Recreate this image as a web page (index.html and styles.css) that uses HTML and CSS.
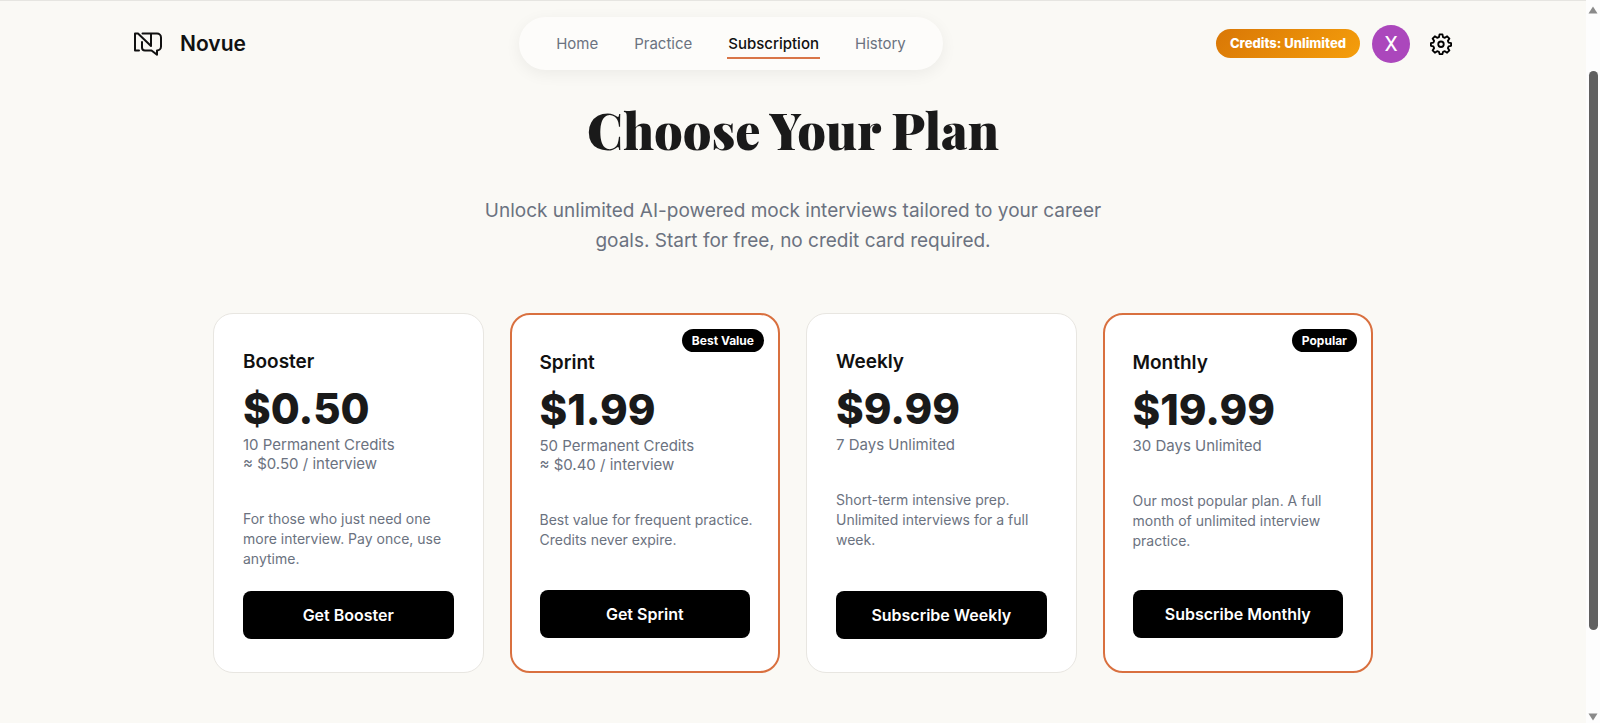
FILE: index.html
```html
<!DOCTYPE html>
<html lang="en">
<head>
  <meta charset="UTF-8">
  <meta name="viewport" content="width=device-width, initial-scale=1.0">
  <title>Novue - Subscription</title>
  <link rel="stylesheet" href="styles.css">
</head>
<body>
  <div class="page">
    <header class="header">
      <a class="brand" href="#">
        <svg class="brand-logo" viewBox="0 0 28 24" fill="none" stroke="#111" stroke-width="2" stroke-linejoin="round" stroke-linecap="round">
          <path d="M5 18.500H1V1.500h3l13 12.500V4.500"/>
          <path d="M8.500 1.500H23a4 4 0 0 1 4 4v9a4 4 0 0 1-4 4V22.800L17.500 18.500H11a3 3 0 0 1-3-3V10M17 4.500v-3"/>
        </svg>
        <span>Novue</span>
      </a>
      <nav class="nav">
        <a href="#">Home</a>
        <a href="#">Practice</a>
        <a class="active" href="#">Subscription</a>
        <a href="#">History</a>
      </nav>
      <div class="account">
        <span class="credits">Credits: Unlimited</span>
        <button class="avatar" type="button">X</button>
        <button class="settings" type="button" aria-label="Settings">
          <svg viewBox="0 0 24 24" fill="none" stroke="#000" stroke-width="2" stroke-linejoin="round">
            <path d="M10.400 1.500h3.200l.6 3 2 .8 2.500-1.700 2.500 2.500-1.700 2.500.8 1.800 2.700.6v3l-2.700.6-.8 1.900 1.700 2.500-2.500 2.500-2.500-1.700-2 .8-.6 2.400h-3.200l-.6-2.400-2-.8-2.500 1.700L2.800 19l1.700-2.500-.8-1.900-2.700-.6v-3l2.700-.6.8-1.800-1.700-2.500 2.500-2.500 2.500 1.700 2-.8z"/>
            <circle cx="12" cy="12.300" r="3"/>
          </svg>
        </button>
      </div>
    </header>

    <main class="main">
      <h1>Choose Your Plan</h1>
      <p class="subtitle">Unlock unlimited AI-powered mock interviews tailored to your career goals. Start for free, no credit card required.</p>

      <div class="plans">
        <section class="card">
          <h2>Booster</h2>
          <div class="price">$0.50</div>
          <p class="credit-info">10 Permanent Credits<br>≈ $0.50 / interview</p>
          <p class="description">For those who just need one more interview. Pay once, use anytime.</p>
          <button class="buy" type="button">Get Booster</button>
        </section>
        <section class="card featured">
          <span class="badge">Best Value</span>
          <h2>Sprint</h2>
          <div class="price">$1.99</div>
          <p class="credit-info">50 Permanent Credits<br>≈ $0.40 / interview</p>
          <p class="description">Best value for frequent practice. Credits never expire.</p>
          <button class="buy" type="button">Get Sprint</button>
        </section>
        <section class="card">
          <h2>Weekly</h2>
          <div class="price">$9.99</div>
          <p class="credit-info">7 Days Unlimited</p>
          <p class="description">Short-term intensive prep. Unlimited interviews for a full week.</p>
          <button class="buy" type="button">Subscribe Weekly</button>
        </section>
        <section class="card featured">
          <span class="badge">Popular</span>
          <h2>Monthly</h2>
          <div class="price">$19.99</div>
          <p class="credit-info">30 Days Unlimited</p>
          <p class="description">Our most popular plan. A full month of unlimited interview practice.</p>
          <button class="buy" type="button">Subscribe Monthly</button>
        </section>
      </div>
    </main>
  </div>

  <div class="scrollbar" aria-hidden="true">
    <svg class="arrow" viewBox="0 0 10 8"><path d="M5 0.500 9.500 7.500H.5z" fill="#8a8a8a"/></svg>
    <div class="track"><div class="thumb"></div></div>
    <svg class="arrow" viewBox="0 0 10 8"><path d="M5 7.500 9.500.5H.5z" fill="#8a8a8a"/></svg>
  </div>
</body>
</html>
```

FILE: styles.css
```css
* {
  box-sizing: border-box;
}
body {
  margin: 0;
  display: flex;
  min-height: 100vh;
  font-family: Inter, "Liberation Sans", sans-serif;
  color: #111;
  background: #faf9f5;
}
h1, h2, p {
  margin: 0;
}
a {
  color: inherit;
  text-decoration: none;
}
button {
  font-family: inherit;
  border: none;
  cursor: pointer;
}
.page {
  flex: 1;
  border-top: 1px solid #e6e5e1;
}

/* Header */
.header {
  display: flex;
  align-items: center;
  justify-content: space-between;
  max-width: 1318px;
  margin: 0 auto;
  padding-top: 16px;
}
.brand {
  display: flex;
  align-items: center;
  gap: 18px;
  font-size: 21px;
  font-weight: 600;
}
.brand-logo {
  width: 28px;
  height: 24px;
}
.nav {
  display: flex;
  align-items: center;
  gap: 34px;
  height: 53px;
  padding: 0 36px;
  border-radius: 27px;
  background: #fdfcfa;
  box-shadow: 0 4px 16px rgba(0, 0, 0, 0.06);
  font-size: 15px;
  color: #6b7280;
}
.nav a {
  padding: 6px 1px 4px;
  border-bottom: 2px solid transparent;
}
.nav .active {
  color: #111;
  font-weight: 500;
  border-color: #d97548;
}
.account {
  display: flex;
  align-items: center;
  gap: 12px;
}
.credits {
  padding: 0 14px;
  border-radius: 15px;
  background: linear-gradient(135deg, #d97706, #f59e0b);
  color: #fff;
  font-size: 13px;
  font-weight: 800;
  line-height: 29px;
}
.avatar {
  width: 38px;
  height: 38px;
  padding: 0;
  border-radius: 50%;
  background: #ab47bc;
  color: #fff;
  font-family: Roboto, sans-serif;
  font-size: 21px;
}
.settings {
  display: flex;
  padding: 0;
  margin-left: 8px;
  background: none;
}
.settings svg {
  width: 22px;
  height: 22px;
}

/* Plans */
.main {
  max-width: 1200px;
  margin: 0 auto;
  padding: 26px 20px 32px;
}
h1 {
  color: #1a1a1a;
  font-family: "Playfair Display", "Liberation Serif", serif;
  font-size: 50px;
  font-weight: 900;
  line-height: 68px;
  text-align: center;
}
.subtitle {
  max-width: 640px;
  margin: 32px auto 0;
  color: #6b7280;
  font-size: 19px;
  line-height: 30px;
  text-align: center;
}
.plans {
  display: grid;
  grid-template-columns: repeat(4, 1fr);
  gap: 26px;
  margin-top: 57px;
}
.card {
  position: relative;
  display: flex;
  flex-direction: column;
  min-height: 360px;
  padding: 36px 29px 33px;
  border: 1px solid #e8e6e1;
  border-radius: 20px;
  background: #fff;
}
.featured {
  padding: 36px 28px 33px;
  border: 2px solid #d9703f;
}
.badge {
  position: absolute;
  top: 14px;
  right: 14px;
  padding: 0 10px;
  border-radius: 12px;
  background: #000;
  color: #fff;
  font-size: 12px;
  font-weight: 700;
  line-height: 23px;
}
.card h2 {
  font-size: 19px;
  font-weight: 600;
  line-height: 24px;
}
.price {
  margin-top: 8px;
  color: #1a1a1a;
  font-size: 42px;
  font-weight: 800;
  line-height: 53px;
}
.credit-info {
  color: #6b7280;
  font-size: 15px;
  line-height: 19px;
}
.description {
  margin: 36px -4px 20px 0;
  color: #6b7280;
  font-size: 14px;
  line-height: 20px;
}
.buy {
  height: 48px;
  margin-top: auto;
  border-radius: 8px;
  background: #000;
  color: #fff;
  font-size: 16px;
  font-weight: 600;
}

/* Scrollbar */
.scrollbar {
  display: flex;
  flex-direction: column;
  align-items: center;
  width: 14px;
  height: 100vh;
  padding: 6px 0 2px;
  background: #fdfdfd;
}
.arrow {
  width: 10px;
  height: 8px;
}
.track {
  flex: 1;
  padding-top: 57px;
}
.thumb {
  width: 9px;
  height: 87%;
  border-radius: 5px;
  background: #606060;
}
```
